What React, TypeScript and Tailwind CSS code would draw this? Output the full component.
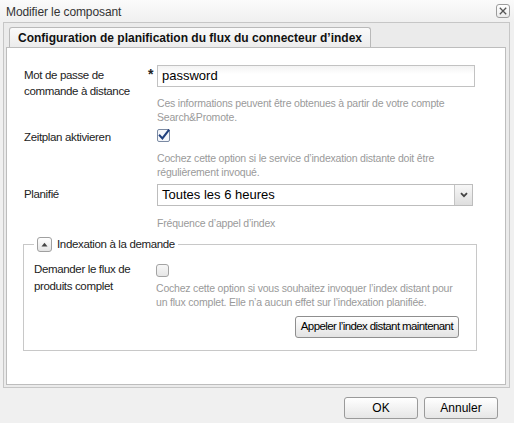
import React from 'react';

function Checked() {
  return (
    <svg width="13" height="13" viewBox="0 0 13 13">
      <rect x="0.5" y="0.5" width="12" height="12" rx="1.5" fill="#f4f6fa" stroke="#7b8aa3" />
      <path d="M2.8 6.6 L5.4 9.4 L11.6 1.4" fill="none" stroke="#1f3f7d" strokeWidth="2.1" strokeLinecap="square" />
    </svg>
  );
}

function Unchecked() {
  return (
    <div className="w-[13px] h-[13px] rounded-[3px] border border-[#a3a3a3] bg-gradient-to-b from-[#f7f7f7] to-[#e6e6e6]" />
  );
}

function Help({ children }: { children: React.ReactNode }) {
  return <div className="text-[10.5px] leading-[14px] tracking-[-0.2px] text-[#9a9a9a]">{children}</div>;
}

export default function App() {
  return (
    <div className="w-[514px] h-[423px] bg-[#f0f0f0] font-['Liberation_Sans',Arial,sans-serif] text-[12px] text-[#222] flex flex-col overflow-hidden">
      {/* title bar */}
      <div className="h-[22px] flex items-center justify-between pl-[6px] pr-[4px] bg-gradient-to-b from-[#fbfbfb] to-[#f0f0f0]">
        <span className="text-[12px] tracking-[-0.1px] text-[#333] mt-[1px]">Modifier le composant</span>
        <button className="w-[14px] h-[14px] border border-[#9c9c9c] rounded-[3px] bg-gradient-to-b from-white to-[#ececec] flex items-center justify-center">
          <svg width="8" height="8" viewBox="0 0 8 8">
            <path d="M0.8 0.8 L7.2 7.2 M7.2 0.8 L0.8 7.2" stroke="#555" strokeWidth="1.3" />
          </svg>
        </button>
      </div>

      {/* panel */}
      <div className="ml-[3px] w-[507px] h-[366px] border border-[#c6c6c6] bg-[#ebebeb] flex flex-col">
        {/* tab strip */}
        <div className="h-[24px] flex items-end pl-[5px]">
          <div className="h-[20px] px-[8px] flex items-center rounded-t-[3px] border border-b-0 border-[#b9b9b9] bg-gradient-to-b from-[#fafafa] to-[#ececec] font-bold text-[12px] text-[#111]">
            Configuration de planification du flux du connecteur d’index
          </div>
        </div>
        <div className="ml-[2px] w-[500px] h-[338px] border border-[#bdbdbd] bg-white pl-[17px] pt-[17px] text-[11.5px] tracking-[-0.35px]">
          {/* row 1 */}
          <div className="flex">
            <div className="w-[124px] leading-[16px] mt-[2px]">Mot de passe de commande à distance</div>
            <div className="w-[9px] text-[14px] leading-[10px] font-bold mt-[4px]">*</div>
            <div>
              <div className="w-[318px] h-[22px] border border-[#c2c2c2] bg-gradient-to-b from-[#f3f3f3] to-white to-[40%] flex items-center pl-[4px] text-[13px] tracking-normal text-black">
                password
              </div>
              <div className="mt-[9px] w-[318px]">
                <Help>Ces informations peuvent être obtenues à partir de votre compte Search&amp;Promote.</Help>
              </div>
            </div>
          </div>

          {/* row 2 */}
          <div className="flex mt-[5px]">
            <div className="w-[133px] leading-[16px] mt-[0px]">Zeitplan aktivieren</div>
            <div>
              <Checked />
              <div className="mt-[9px] w-[318px]">
                <Help>Cochez cette option si le service d’indexation distante doit être régulièrement invoqué.</Help>
              </div>
            </div>
          </div>

          {/* row 3 */}
          <div className="flex mt-[5px]">
            <div className="w-[133px] leading-[16px] mt-[2px]">Planifié</div>
            <div>
              <div className="w-[316px] h-[22px] border border-[#bdbdbd] bg-white flex">
                <div className="flex-1 flex items-center pl-[4px] text-[13px] tracking-normal text-black">Toutes les 6 heures</div>
                <div className="w-[18px] border-l border-[#c4c4c4] bg-gradient-to-b from-[#f7f7f7] to-[#dedede] flex items-center justify-center">
                  <svg width="8" height="6" viewBox="0 0 8 6">
                    <path d="M1 1.2 L4 4.2 L7 1.2" fill="none" stroke="#444" strokeWidth="1.8" />
                  </svg>
                </div>
              </div>
              <div className="mt-[10px]">
                <Help>Fréquence d’appel d’index</Help>
              </div>
            </div>
          </div>

          {/* fieldset */}
          <fieldset className="mt-[6px] ml-[-1px] w-[454px] border border-[#c8c8c8] pl-[10px] pb-[12px]">
            <legend className="px-[3px] flex items-center gap-[5px]">
              <span className="w-[15px] h-[15px] rounded-[3px] border border-[#a0a0a0] bg-gradient-to-b from-white to-[#e4e4e4] flex items-center justify-center">
                <svg width="7" height="5" viewBox="0 0 7 5">
                  <path d="M0.5 4.5 L3.5 0.8 L6.5 4.5 Z" fill="#444" />
                </svg>
              </span>
              <span className="leading-[16px]">Indexation à la demande</span>
            </legend>
            <div className="flex mt-[12px]">
              <div className="w-[122px] leading-[17px] mt-[-3px]">Demander le flux de produits complet</div>
              <div>
                <Unchecked />
                <div className="mt-[4px] w-[303px]">
                  <Help>Cochez cette option si vous souhaitez invoquer l’index distant pour un flux complet. Elle n’a aucun effet sur l’indexation planifiée.</Help>
                </div>
                <div className="flex justify-end mt-[7px]">
                  <button className="h-[22px] px-[5px] border border-[#8e8e8e] rounded-[3px] bg-gradient-to-b from-white to-[#e3e3e3] text-[11.5px] tracking-[-0.6px] text-black">
                    Appeler l’index distant maintenant
                  </button>
                </div>
              </div>
            </div>
          </fieldset>
        </div>
      </div>

      {/* footer buttons */}
      <div className="flex justify-end gap-[6px] pr-[16px] mt-[9px]">
        <button className="w-[74px] h-[22px] border border-[#9a9a9a] rounded-[3px] bg-gradient-to-b from-white to-[#e6e6e6] text-[12px] text-black">
          OK
        </button>
        <button className="w-[74px] h-[22px] border border-[#9a9a9a] rounded-[3px] bg-gradient-to-b from-white to-[#e6e6e6] text-[12px] text-black">
          Annuler
        </button>
      </div>
    </div>
  );
}
